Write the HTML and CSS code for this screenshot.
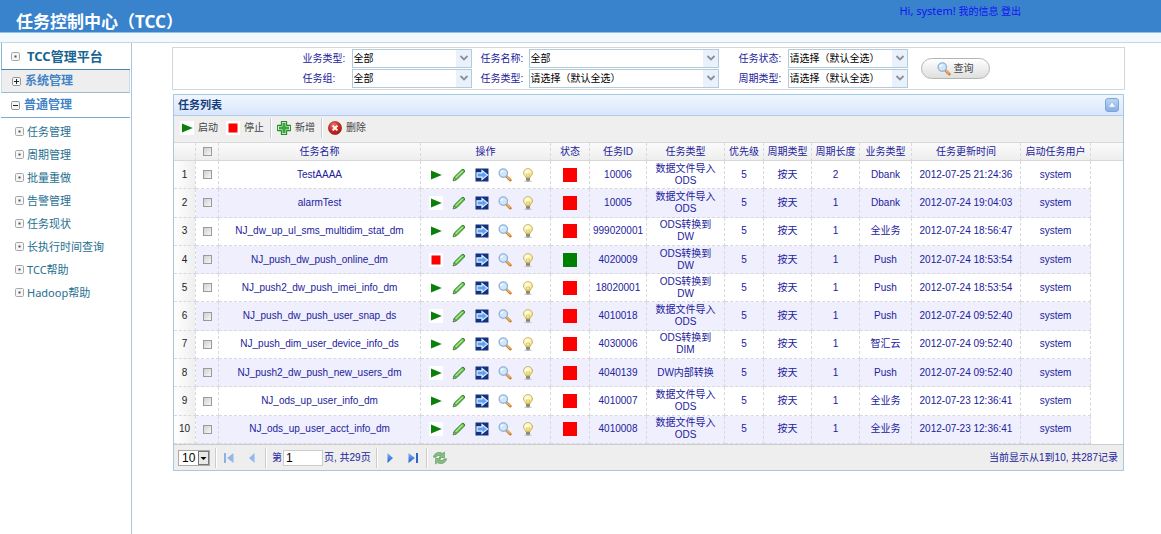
FILE: index.html
```html
<!DOCTYPE html>
<html lang="zh-CN">
<head>
<meta charset="utf-8">
<title>任务控制中心（TCC）</title>
<link rel="stylesheet" href="styles.css">
</head>
<body>
<svg class="defs" aria-hidden="true">
  <defs>
    <linearGradient id="gBlue" x1="0" y1="0" x2="0" y2="1"><stop offset="0" stop-color="#7db1f2"/><stop offset="1" stop-color="#1f5fd0"/></linearGradient>
    <radialGradient id="gRed" cx=".4" cy=".3" r=".8"><stop offset="0" stop-color="#f08070"/><stop offset=".5" stop-color="#cf2a24"/><stop offset="1" stop-color="#9c1010"/></radialGradient>
    <radialGradient id="gBulb" cx=".4" cy=".35" r=".7"><stop offset="0" stop-color="#fffef0"/><stop offset=".6" stop-color="#f9f0ac"/><stop offset="1" stop-color="#e6cb62"/></radialGradient>
    <symbol id="play" viewBox="0 0 14 14"><rect width="14" height="14" fill="#fff"/><path d="M2 2.5 12.8 7 2 11.5z" fill="#0a800a"/></symbol>
    <symbol id="stop" viewBox="0 0 14 14"><rect width="14" height="14" fill="#fff"/><rect x="2.5" y="2.5" width="9" height="9" fill="#f00"/></symbol>
    <symbol id="edit" viewBox="0 0 14 14"><path d="M1.2 12.8 2.3 9 9.8 1.7q1.2-1 2.3.1t.2 2.3L4.900 11.600z" fill="#5dbb46" stroke="#2c7a26" stroke-width=".9"/><path d="M3.6 9.8 10.6 3" stroke="#b5ec9b" stroke-width="1.1"/><path d="M1.2 12.8 2 10.2 3.8 12z" fill="#e9d9a3" stroke="#37702a" stroke-width=".6"/></symbol>
    <symbol id="go" viewBox="0 0 14 14"><rect x=".5" y=".5" width="13" height="13" fill="#12317f"/><path d="M2 4.800H7V2.400L12.600 7 7 11.600V9.200H2z" fill="#5da2f0" stroke="#e4f1ff" stroke-width="1.2"/></symbol>
    <symbol id="find" viewBox="0 0 14 14"><path d="M8.300 8.300 12.400 12.200" stroke="#c9792b" stroke-width="2.6" stroke-linecap="round"/><path d="M8.8 8.5 12 11.6" stroke="#f5bd78" stroke-width="1.1" stroke-linecap="round"/><circle cx="5.3" cy="5.1" r="4.2" fill="#cfe6fb" stroke="#8fb2d9" stroke-width="1.3"/><path d="M3 5Q3.4 3 5.4 2.9" stroke="#fff" fill="none" stroke-width="1.2"/></symbol>
    <symbol id="bulb" viewBox="0 0 14 14"><ellipse cx="7" cy="13.200" rx="4.200" ry=".8" fill="#ccc"/><path d="M7 .5A4.500 4.500 0 0 1 11.500 5C11.500 7 9.400 7.800 9.100 9.700H4.900C4.600 7.800 2.500 7 2.500 5A4.500 4.500 0 0 1 7 .5z" fill="url(#gBulb)" stroke="#c0a84e" stroke-width=".8"/><path d="M6 9.500 5.500 6H8.500L8 9.500" fill="none" stroke="#cfae3c" stroke-width=".6"/><path d="M5 10H9V12.600L7.800 13.500H6.200L5 12.600z" fill="#9b9b8c"/><path d="M5 11.200H9" stroke="#5f5f58" stroke-width=".6"/></symbol>
    <symbol id="add" viewBox="0 0 14 14"><path d="M4.4.6H9.600V4.400H13.400V9.600H9.600V13.400H4.400V9.600H.6V4.400H4.400z" fill="#fff" stroke="#28872b" stroke-width="1.1" stroke-linejoin="round"/><path d="M5.400 2H8.600V5.400H12V8.600H8.600V12H5.400V8.600H2V5.400H5.400z" fill="#37a83a"/></symbol>
    <symbol id="del" viewBox="0 0 14 14"><circle cx="7" cy="7" r="6.600" fill="url(#gRed)" stroke="#a02020" stroke-width=".6"/><path d="M4.600 4.600 9.400 9.400M9.400 4.600 4.600 9.400" stroke="#fff" stroke-width="2"/></symbol>
    <symbol id="first" viewBox="0 0 14 14"><rect x="2" y="2" width="2" height="10" fill="#8db1e3"/><path d="M11.500 2V12L5 7z" fill="#94b8ea"/></symbol>
    <symbol id="prev" viewBox="0 0 14 14"><path d="M9.500 2V12L4 7z" fill="#94b8ea"/></symbol>
    <symbol id="next" viewBox="0 0 14 14"><path d="M4.500 2V12L10 7z" fill="url(#gBlue)"/></symbol>
    <symbol id="last" viewBox="0 0 14 14"><rect x="10" y="2" width="2" height="10" fill="#2c66c9"/><path d="M2.500 2V12L9 7z" fill="url(#gBlue)"/></symbol>
    <symbol id="reload" viewBox="0 0 14 14"><path d="M.5 6.200C1 2 6 .2 9.800 2.500L11.400 1V6.500H6L7.700 4.900C5.800 3.900 3.700 4.600 3 6.200z" fill="#84bf80" stroke="#4e9150" stroke-width=".6"/><path d="M13.500 7.800C13 12 8 13.800 4.200 11.500L2.600 13V7.500H8L6.300 9.100C8.200 10.100 10.300 9.400 11 7.800z" fill="#84bf80" stroke="#4e9150" stroke-width=".6"/></symbol>
    <symbol id="dot" viewBox="0 0 9 9"><rect x=".5" y=".5" width="8" height="8" rx="1.2" fill="#f6f6f4" stroke="#a3a8ae"/><rect x="3.500" y="3.500" width="2" height="2" fill="#555"/></symbol>
    <symbol id="plus" viewBox="0 0 9 9"><rect x=".5" y=".5" width="8" height="8" rx="1.2" fill="#f6f6f4" stroke="#8f959c"/><path d="M2 4.500H7M4.500 2V7" stroke="#222"/></symbol>
    <symbol id="minus" viewBox="0 0 9 9"><rect x=".5" y=".5" width="8" height="8" rx="1.2" fill="#f6f6f4" stroke="#8f959c"/><path d="M2 4.500H7" stroke="#222"/></symbol>
    <symbol id="chev" viewBox="0 0 10 8"><path d="M1.500 2 5 5.500 8.500 2" fill="none" stroke="#8b9099" stroke-width="1.8"/></symbol>
  </defs>
</svg>

<header class="top">
  <h1>任务控制中心（TCC）</h1>
  <div class="user"><a href="#" class="who">Hi, system!</a> <a href="#">我的信息</a> <a href="#">登出</a></div>
</header>
<div class="strip"></div>

<div class="layout">
  <nav class="side">
    <a class="root" href="#"><svg><use href="#dot"/></svg>TCC管理平台</a>
    <a class="group closed" href="#"><svg><use href="#plus"/></svg>系统管理</a>
    <a class="group open" href="#"><svg><use href="#minus"/></svg>普通管理</a>
    <ul>
      <li><a href="#"><svg><use href="#dot"/></svg>任务管理</a></li>
      <li><a href="#"><svg><use href="#dot"/></svg>周期管理</a></li>
      <li><a href="#"><svg><use href="#dot"/></svg>批量重做</a></li>
      <li><a href="#"><svg><use href="#dot"/></svg>告警管理</a></li>
      <li><a href="#"><svg><use href="#dot"/></svg>任务现状</a></li>
      <li><a href="#"><svg><use href="#dot"/></svg>长执行时间查询</a></li>
      <li><a href="#"><svg><use href="#dot"/></svg>TCC帮助</a></li>
      <li><a href="#"><svg><use href="#dot"/></svg>Hadoop帮助</a></li>
    </ul>
  </nav>

  <main>
    <form class="filter">
      <div class="fields">
        <label for="f1">业务类型:</label><span class="combo"><select id="f1"><option>全部</option></select><svg><use href="#chev"/></svg></span>
        <label for="f2">任务名称:</label><span class="combo"><select id="f2"><option>全部</option></select><svg><use href="#chev"/></svg></span>
        <label for="f3">任务状态:</label><span class="combo"><select id="f3"><option>请选择（默认全选）</option></select><svg><use href="#chev"/></svg></span>
        <label for="f4">任务组:</label><span class="combo"><select id="f4"><option>全部</option></select><svg><use href="#chev"/></svg></span>
        <label for="f5">任务类型:</label><span class="combo"><select id="f5"><option>请选择（默认全选）</option></select><svg><use href="#chev"/></svg></span>
        <label for="f6">周期类型:</label><span class="combo"><select id="f6"><option>请选择（默认全选）</option></select><svg><use href="#chev"/></svg></span>
      </div>
      <button type="button" class="search"><svg class="ic"><use href="#find"/></svg>查询</button>
    </form>

    <section class="panel">
      <div class="title"><h2>任务列表</h2><button type="button" class="fold" aria-label="收起"><svg viewBox="0 0 14 14"><path d="M7 4.500 10.500 9H3.500z" fill="#fff"/></svg></button></div>
      <div class="tools">
        <button type="button"><svg class="ic"><use href="#play"/></svg>启动</button>
        <button type="button"><svg class="ic"><use href="#stop"/></svg>停止</button>
        <i class="sep"></i>
        <button type="button"><svg class="ic"><use href="#add"/></svg>新增</button>
        <i class="sep"></i>
        <button type="button"><svg class="ic"><use href="#del"/></svg>删除</button>
      </div>
      <table>
        <colgroup><col class="c-no"><col class="c-ck"><col class="c-name"><col class="c-ops"><col class="c-st"><col class="c-id"><col class="c-type"><col class="c-st"><col class="c-per"><col class="c-per"><col class="c-biz"><col class="c-date"><col class="c-user"><col></colgroup>
        <thead><tr><th></th><th><input type="checkbox" aria-label="全选"></th><th>任务名称</th><th>操作</th><th>状态</th><th>任务ID</th><th>任务类型</th><th>优先级</th><th>周期类型</th><th>周期长度</th><th>业务类型</th><th>任务更新时间</th><th>启动任务用户</th><th class="rest"></th></tr></thead>
        <tbody>
          <tr><td>1</td><td><input type="checkbox" aria-label="选择 1"></td><td>TestAAAA</td><td><div class="ops"><button type="button" aria-label="启动"><svg class="ic"><use href="#play"/></svg></button><button type="button" aria-label="编辑"><svg class="ic"><use href="#edit"/></svg></button><button type="button" aria-label="重做"><svg class="ic"><use href="#go"/></svg></button><button type="button" aria-label="查看"><svg class="ic"><use href="#find"/></svg></button><button type="button" aria-label="告警"><svg class="ic"><use href="#bulb"/></svg></button></div></td><td><span class="state"></span></td><td>10006</td><td>数据文件导入ODS</td><td>5</td><td>按天</td><td>2</td><td>Dbank</td><td>2012-07-25 21:24:36</td><td>system</td><td class="rest"></td></tr>
          <tr><td>2</td><td><input type="checkbox" aria-label="选择 2"></td><td>alarmTest</td><td><div class="ops"><button type="button" aria-label="启动"><svg class="ic"><use href="#play"/></svg></button><button type="button" aria-label="编辑"><svg class="ic"><use href="#edit"/></svg></button><button type="button" aria-label="重做"><svg class="ic"><use href="#go"/></svg></button><button type="button" aria-label="查看"><svg class="ic"><use href="#find"/></svg></button><button type="button" aria-label="告警"><svg class="ic"><use href="#bulb"/></svg></button></div></td><td><span class="state"></span></td><td>10005</td><td>数据文件导入ODS</td><td>5</td><td>按天</td><td>1</td><td>Dbank</td><td>2012-07-24 19:04:03</td><td>system</td><td class="rest"></td></tr>
          <tr><td>3</td><td><input type="checkbox" aria-label="选择 3"></td><td>NJ_dw_up_ul_sms_multidim_stat_dm</td><td><div class="ops"><button type="button" aria-label="启动"><svg class="ic"><use href="#play"/></svg></button><button type="button" aria-label="编辑"><svg class="ic"><use href="#edit"/></svg></button><button type="button" aria-label="重做"><svg class="ic"><use href="#go"/></svg></button><button type="button" aria-label="查看"><svg class="ic"><use href="#find"/></svg></button><button type="button" aria-label="告警"><svg class="ic"><use href="#bulb"/></svg></button></div></td><td><span class="state"></span></td><td>999020001</td><td>ODS转换到DW</td><td>5</td><td>按天</td><td>1</td><td>全业务</td><td>2012-07-24 18:56:47</td><td>system</td><td class="rest"></td></tr>
          <tr><td>4</td><td><input type="checkbox" aria-label="选择 4"></td><td>NJ_push_dw_push_online_dm</td><td><div class="ops"><button type="button" aria-label="停止"><svg class="ic"><use href="#stop"/></svg></button><button type="button" aria-label="编辑"><svg class="ic"><use href="#edit"/></svg></button><button type="button" aria-label="重做"><svg class="ic"><use href="#go"/></svg></button><button type="button" aria-label="查看"><svg class="ic"><use href="#find"/></svg></button><button type="button" aria-label="告警"><svg class="ic"><use href="#bulb"/></svg></button></div></td><td><span class="state on"></span></td><td>4020009</td><td>ODS转换到DW</td><td>5</td><td>按天</td><td>1</td><td>Push</td><td>2012-07-24 18:53:54</td><td>system</td><td class="rest"></td></tr>
          <tr><td>5</td><td><input type="checkbox" aria-label="选择 5"></td><td>NJ_push2_dw_push_imei_info_dm</td><td><div class="ops"><button type="button" aria-label="启动"><svg class="ic"><use href="#play"/></svg></button><button type="button" aria-label="编辑"><svg class="ic"><use href="#edit"/></svg></button><button type="button" aria-label="重做"><svg class="ic"><use href="#go"/></svg></button><button type="button" aria-label="查看"><svg class="ic"><use href="#find"/></svg></button><button type="button" aria-label="告警"><svg class="ic"><use href="#bulb"/></svg></button></div></td><td><span class="state"></span></td><td>18020001</td><td>ODS转换到DW</td><td>5</td><td>按天</td><td>1</td><td>Push</td><td>2012-07-24 18:53:54</td><td>system</td><td class="rest"></td></tr>
          <tr><td>6</td><td><input type="checkbox" aria-label="选择 6"></td><td>NJ_push_dw_push_user_snap_ds</td><td><div class="ops"><button type="button" aria-label="启动"><svg class="ic"><use href="#play"/></svg></button><button type="button" aria-label="编辑"><svg class="ic"><use href="#edit"/></svg></button><button type="button" aria-label="重做"><svg class="ic"><use href="#go"/></svg></button><button type="button" aria-label="查看"><svg class="ic"><use href="#find"/></svg></button><button type="button" aria-label="告警"><svg class="ic"><use href="#bulb"/></svg></button></div></td><td><span class="state"></span></td><td>4010018</td><td>数据文件导入ODS</td><td>5</td><td>按天</td><td>1</td><td>Push</td><td>2012-07-24 09:52:40</td><td>system</td><td class="rest"></td></tr>
          <tr><td>7</td><td><input type="checkbox" aria-label="选择 7"></td><td>NJ_push_dim_user_device_info_ds</td><td><div class="ops"><button type="button" aria-label="启动"><svg class="ic"><use href="#play"/></svg></button><button type="button" aria-label="编辑"><svg class="ic"><use href="#edit"/></svg></button><button type="button" aria-label="重做"><svg class="ic"><use href="#go"/></svg></button><button type="button" aria-label="查看"><svg class="ic"><use href="#find"/></svg></button><button type="button" aria-label="告警"><svg class="ic"><use href="#bulb"/></svg></button></div></td><td><span class="state"></span></td><td>4030006</td><td>ODS转换到DIM</td><td>5</td><td>按天</td><td>1</td><td>智汇云</td><td>2012-07-24 09:52:40</td><td>system</td><td class="rest"></td></tr>
          <tr><td>8</td><td><input type="checkbox" aria-label="选择 8"></td><td>NJ_push2_dw_push_new_users_dm</td><td><div class="ops"><button type="button" aria-label="启动"><svg class="ic"><use href="#play"/></svg></button><button type="button" aria-label="编辑"><svg class="ic"><use href="#edit"/></svg></button><button type="button" aria-label="重做"><svg class="ic"><use href="#go"/></svg></button><button type="button" aria-label="查看"><svg class="ic"><use href="#find"/></svg></button><button type="button" aria-label="告警"><svg class="ic"><use href="#bulb"/></svg></button></div></td><td><span class="state"></span></td><td>4040139</td><td>DW内部转换</td><td>5</td><td>按天</td><td>1</td><td>Push</td><td>2012-07-24 09:52:40</td><td>system</td><td class="rest"></td></tr>
          <tr><td>9</td><td><input type="checkbox" aria-label="选择 9"></td><td>NJ_ods_up_user_info_dm</td><td><div class="ops"><button type="button" aria-label="启动"><svg class="ic"><use href="#play"/></svg></button><button type="button" aria-label="编辑"><svg class="ic"><use href="#edit"/></svg></button><button type="button" aria-label="重做"><svg class="ic"><use href="#go"/></svg></button><button type="button" aria-label="查看"><svg class="ic"><use href="#find"/></svg></button><button type="button" aria-label="告警"><svg class="ic"><use href="#bulb"/></svg></button></div></td><td><span class="state"></span></td><td>4010007</td><td>数据文件导入ODS</td><td>5</td><td>按天</td><td>1</td><td>全业务</td><td>2012-07-23 12:36:41</td><td>system</td><td class="rest"></td></tr>
          <tr><td>10</td><td><input type="checkbox" aria-label="选择 10"></td><td>NJ_ods_up_user_acct_info_dm</td><td><div class="ops"><button type="button" aria-label="启动"><svg class="ic"><use href="#play"/></svg></button><button type="button" aria-label="编辑"><svg class="ic"><use href="#edit"/></svg></button><button type="button" aria-label="重做"><svg class="ic"><use href="#go"/></svg></button><button type="button" aria-label="查看"><svg class="ic"><use href="#find"/></svg></button><button type="button" aria-label="告警"><svg class="ic"><use href="#bulb"/></svg></button></div></td><td><span class="state"></span></td><td>4010008</td><td>数据文件导入ODS</td><td>5</td><td>按天</td><td>1</td><td>全业务</td><td>2012-07-23 12:36:41</td><td>system</td><td class="rest"></td></tr>
        </tbody>
      </table>
      <div class="pager">
        <span class="size"><select aria-label="每页记录数"><option>10</option></select><svg viewBox="0 0 11 14"><rect x=".5" y=".5" width="10" height="13" fill="#e8e8e8" stroke="#777"/><path d="M2.500 6H8.500L5.500 9z" fill="#000"/></svg></span>
        <i class="sep"></i>
        <button type="button" aria-label="首页"><svg class="ic"><use href="#first"/></svg></button>
        <button type="button" aria-label="上一页"><svg class="ic"><use href="#prev"/></svg></button>
        <i class="sep"></i>
        <div class="page"><label for="page">第</label><input id="page" type="text" value="1"><span>页, 共29页</span></div>
        <i class="sep"></i>
        <button type="button" aria-label="下一页"><svg class="ic"><use href="#next"/></svg></button>
        <button type="button" aria-label="末页"><svg class="ic"><use href="#last"/></svg></button>
        <i class="sep"></i>
        <button type="button" aria-label="刷新"><svg class="ic"><use href="#reload"/></svg></button>
        <span class="info">当前显示从1到10, 共287记录</span>
      </div>
    </section>
  </main>
</div>
</body>
</html>
```
FILE: styles.css
```css
* { box-sizing: border-box; }
body {
  margin: 0;
  min-height: 100vh;
  display: flex;
  flex-direction: column;
  background: #fff;
  color: #22229c;
  font: 10px/12px "Liberation Sans", "Noto Sans CJK SC", sans-serif;
}
h1, h2, ul { margin: 0; padding: 0; }
button, input, select { font: inherit; color: inherit; margin: 0; }
button { padding: 0; border: 0; background: none; }
a { text-decoration: none; }
svg { display: block; flex: none; }
.defs { position: absolute; width: 0; height: 0; }
.ic { width: 14px; height: 14px; }

.top {
  height: 33px;
  display: flex;
  justify-content: space-between;
  padding: 0 140px 0 16px;
  background: #3983cd;
  border-bottom: 1px solid #8fbfe2;
  font-family: "Noto Sans", "Noto Sans CJK SC", sans-serif;
}
.top h1 { color: #fff; font-size: 17px; line-height: 22px; padding-top: 11px; }
.user { padding-top: 4px; line-height: 14px; }
.user a { color: #1414f0; }
.user .who { font-size: 11px; }
.strip { height: 10px; background: #f1f9ff; border-bottom: 1px solid #c8d6de; }

.layout { flex: 1; display: flex; }
.side {
  flex: none;
  width: 132px;
  padding-right: 1px;
  border-right: 1px solid #a9c6dd;
  font-family: "Noto Sans", "Noto Sans CJK SC", sans-serif;
}
.side a { display: flex; align-items: center; }
.side svg { width: 9px; height: 9px; }
.root, .group { font-size: 12px; font-weight: bold; margin-left: 1px; }
.root { height: 27px; gap: 7px; padding-left: 9px; font-size: 13px; color: #17658f; border-left: 1px solid #8cb5cf; border-bottom: 1px solid #4c87ab; }
.group { gap: 4px; padding-left: 10px; color: #3f82c6; }
.closed { height: 23px; background: #eee; border: 1px solid #c9dcea; border-top: 0; border-bottom: 1px solid #9fb8cb; }
.open { height: 25px; border-bottom: 1px solid #7ba9d6; }
.side ul { list-style: none; padding-top: 2px; }
.side li a { height: 23px; gap: 3px; padding-left: 15px; font-size: 11px; color: #26708f; }

main { flex: 1; min-width: 0; padding: 4px 36px 0 40px; }
.filter {
  display: flex;
  justify-content: center;
  align-items: center;
  gap: 13px;
  padding: 1px 5px 1px 0;
  border: 1px solid #d3d7da;
}
.fields { display: grid; grid-template-columns: 49px 120px 57px 190px 69px 120px; gap: 1px 0; }
.fields label { line-height: 19px; white-space: nowrap; }
.fields label:nth-of-type(3n+2) { margin-left: 9px; }
.fields label:nth-of-type(3n) { margin-left: 20px; }
.combo { position: relative; }
.combo select {
  display: block;
  width: 100%;
  height: 19px;
  padding: 0 18px 0 1px;
  appearance: none;
  border: 1px solid #b3ccdb;
  border-radius: 0;
  background: linear-gradient(to left, #e9f1fc 15px, #fff 15px);
  color: #000;
}
.combo svg { position: absolute; right: 3px; top: 5px; width: 10px; height: 8px; pointer-events: none; }
.search {
  display: flex;
  align-items: center;
  justify-content: center;
  gap: 3px;
  width: 69px;
  height: 21px;
  border: 1px solid #b4b4b4;
  border-radius: 11px;
  background: linear-gradient(#fff, #dedede);
  color: #444;
}

.panel { margin: 4px 1px 0; border: 1px solid #a6c9e2; }
.title {
  display: flex;
  align-items: center;
  justify-content: space-between;
  height: 21px;
  padding: 0 4px;
  background: linear-gradient(#f0f6ff, #d9e6fc);
  border-bottom: 1px solid #b4cbea;
}
.title h2 { font-size: 11px; color: #153f7c; }
.fold { width: 14px; height: 14px; border: 1px solid #7da4d6; border-radius: 3px; background: linear-gradient(#bcd5f5, #86afe4); }
.fold svg { width: 12px; height: 12px; }
.tools {
  display: flex;
  align-items: center;
  gap: 5px;
  height: 27px;
  padding: 0 6px 2px;
  background: #efefef;
  border-bottom: 1px solid #d8d8d8;
}
.tools button { display: flex; align-items: center; gap: 4px; color: #444; margin-right: 3px; }
.tools .sep { margin-left: -2px; }
.sep { width: 2px; height: 20px; border-left: 1px solid #ccc; border-right: 1px solid #fff; }

table { width: 100%; height: 301px; table-layout: fixed; border-collapse: separate; border-spacing: 0; }
.c-no { width: 22px; }
.c-ck { width: 23px; }
.c-name { width: 202px; }
.c-ops { width: 130px; }
.c-st { width: 39px; }
.c-id { width: 57px; }
.c-type { width: 78px; }
.c-per { width: 48px; }
.c-biz { width: 52px; }
.c-date { width: 109px; }
.c-user { width: 70px; }
th, td { padding: 0; text-align: center; vertical-align: middle; border-right: 1px dashed #d9d9dd; }
th { height: 18px; font-weight: normal; white-space: nowrap; background: linear-gradient(#fbfbfb, #eee); border-bottom: 1px solid #d8d8d8; }
td { height: 28px; border-bottom: 1px dashed #d9d9dd; }
td:nth-child(7) { padding: 0 7px; }
tbody tr:nth-child(even) td { background: #efeffd; }
tbody td:first-child, tbody tr:nth-child(even) td:first-child { color: #222; background: linear-gradient(to right, #fff, #efefef); }
th.rest { border-right: 0; }
tbody td.rest, tbody tr:nth-child(even) td.rest { background: #fff; border: 0; }
input[type="checkbox"] {
  display: block;
  width: 9px;
  height: 9px;
  margin: 0 auto;
  appearance: none;
  border: 1px solid #9a9a9a;
  background: linear-gradient(135deg, #cfcfcf, #f8f8f8);
}
.ops { display: flex; gap: 9px; padding-left: 8px; }
.state { display: block; width: 14px; height: 14px; margin: 0 auto; background: #f00; }
.state.on { background: #008000; }

.pager {
  display: flex;
  align-items: center;
  height: 26px;
  padding: 0 5px 0 4px;
  gap: 5px;
  background: #eee;
  border-top: 1px solid #ccc;
}
.size { position: relative; }
.size select { display: block; width: 32px; height: 16px; padding: 0 0 0 3px; appearance: none; border: 1px solid #aaa; border-radius: 0; background: #fff; color: #000; font-size: 12px; }
.size svg { position: absolute; right: 1px; top: 1px; width: 11px; height: 14px; pointer-events: none; }
.pager button { margin-right: 4px; }
.pager button + .sep { margin-left: -3px; }
.page { display: flex; align-items: center; gap: 1px; }
.page input { width: 40px; height: 16px; padding: 0 2px; border: 1px solid #ccc; background: #fff; color: #000; font-size: 12px; }
.info { margin-left: auto; }
```
